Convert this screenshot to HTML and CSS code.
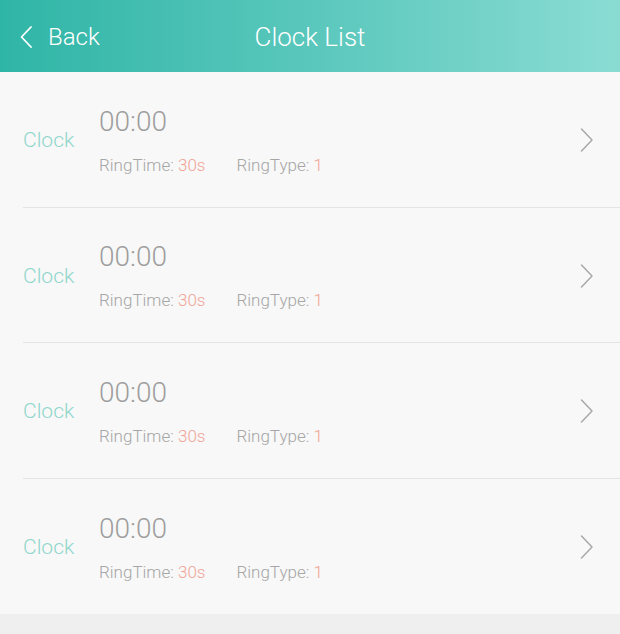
FILE: index.html
```html
<!DOCTYPE html>
<html>
<head>
<meta charset="utf-8">
<link rel="stylesheet" href="styles.css">
</head>
<body>
<div class="app">
  <header class="header">
    <div class="back">
      <svg class="back-icon" width="14" height="24" viewBox="0 0 14 24"><path d="M12 2 L2.5 12 L12 22" fill="none" stroke="#ffffff" stroke-width="1.8" stroke-linecap="round" stroke-linejoin="round"/></svg>
      <span class="back-text">Back</span>
    </div>
    <div class="title">Clock List</div>
  </header>
  <ul class="list">
    <li class="row">
      <span class="label">Clock</span>
      <div class="info">
        <div class="time">00:00</div>
        <div class="meta"><span class="key">RingTime: <em>30s</em></span><span class="key">RingType: <em>1</em></span></div>
      </div>
      <svg class="chev" width="16" height="26" viewBox="0 0 16 26"><path d="M2.5 2 L13 13 L2.5 24" fill="none" stroke="#a8a8a8" stroke-width="1.5" stroke-linecap="round" stroke-linejoin="round"/></svg>
    </li>
    <li class="row">
      <span class="label">Clock</span>
      <div class="info">
        <div class="time">00:00</div>
        <div class="meta"><span class="key">RingTime: <em>30s</em></span><span class="key">RingType: <em>1</em></span></div>
      </div>
      <svg class="chev" width="16" height="26" viewBox="0 0 16 26"><path d="M2.5 2 L13 13 L2.5 24" fill="none" stroke="#a8a8a8" stroke-width="1.5" stroke-linecap="round" stroke-linejoin="round"/></svg>
    </li>
    <li class="row">
      <span class="label">Clock</span>
      <div class="info">
        <div class="time">00:00</div>
        <div class="meta"><span class="key">RingTime: <em>30s</em></span><span class="key">RingType: <em>1</em></span></div>
      </div>
      <svg class="chev" width="16" height="26" viewBox="0 0 16 26"><path d="M2.5 2 L13 13 L2.5 24" fill="none" stroke="#a8a8a8" stroke-width="1.5" stroke-linecap="round" stroke-linejoin="round"/></svg>
    </li>
    <li class="row">
      <span class="label">Clock</span>
      <div class="info">
        <div class="time">00:00</div>
        <div class="meta"><span class="key">RingTime: <em>30s</em></span><span class="key">RingType: <em>1</em></span></div>
      </div>
      <svg class="chev" width="16" height="26" viewBox="0 0 16 26"><path d="M2.5 2 L13 13 L2.5 24" fill="none" stroke="#a8a8a8" stroke-width="1.5" stroke-linecap="round" stroke-linejoin="round"/></svg>
    </li>
  </ul>
</div>
</body>
</html>
```

FILE: styles.css
```css
* { box-sizing: border-box; }
html, body { margin: 0; padding: 0; }
body {
  background: #efefef;
  font-family: Roboto, "Noto Sans", sans-serif;
  font-weight: 300;
  width: 620px;
  height: 634px;
  overflow: hidden;
}
.app { display: flex; flex-direction: column; }
.header {
  height: 72px;
  background: linear-gradient(90deg, #2fb5a6 0%, #5ac7bc 50%, #8adcd3 100%);
  display: flex;
  align-items: center;
  position: relative;
  color: #ffffff;
}
.back {
  display: flex;
  align-items: center;
  padding-left: 19px;
  gap: 15px;
  padding-top: 2px;
}
.back-text { font-size: 24px; line-height: 1; }
.title {
  position: absolute;
  left: 0;
  right: 0;
  text-align: center;
  font-size: 26px;
  padding-top: 2px;
  pointer-events: none;
}
.list {
  list-style: none;
  margin: 0;
  padding: 0;
  background: #f8f8f8;
}
.row {
  height: 135.5px;
  margin-left: 23px;
  display: flex;
  align-items: center;
  border-bottom: 1px solid #e4e4e4;
}
.row:last-child { border-bottom: none; }
.label {
  width: 76px;
  font-size: 21px;
  color: #8ed6cb;
  padding-top: 2px;
}
.info {
  flex: 1;
  display: flex;
  flex-direction: column;
  gap: 18px;
  padding-top: 3px;
}
.time {
  font-size: 28px;
  color: #9e9e9e;
  line-height: 30px;
}
.meta {
  display: flex;
  gap: 31px;
  font-size: 17px;
  color: #a6a6a6;
  line-height: 20px;
}
.meta em { font-style: normal; color: #f0a395; }
.chev { margin-right: 25px; margin-top: 2px; }
```
